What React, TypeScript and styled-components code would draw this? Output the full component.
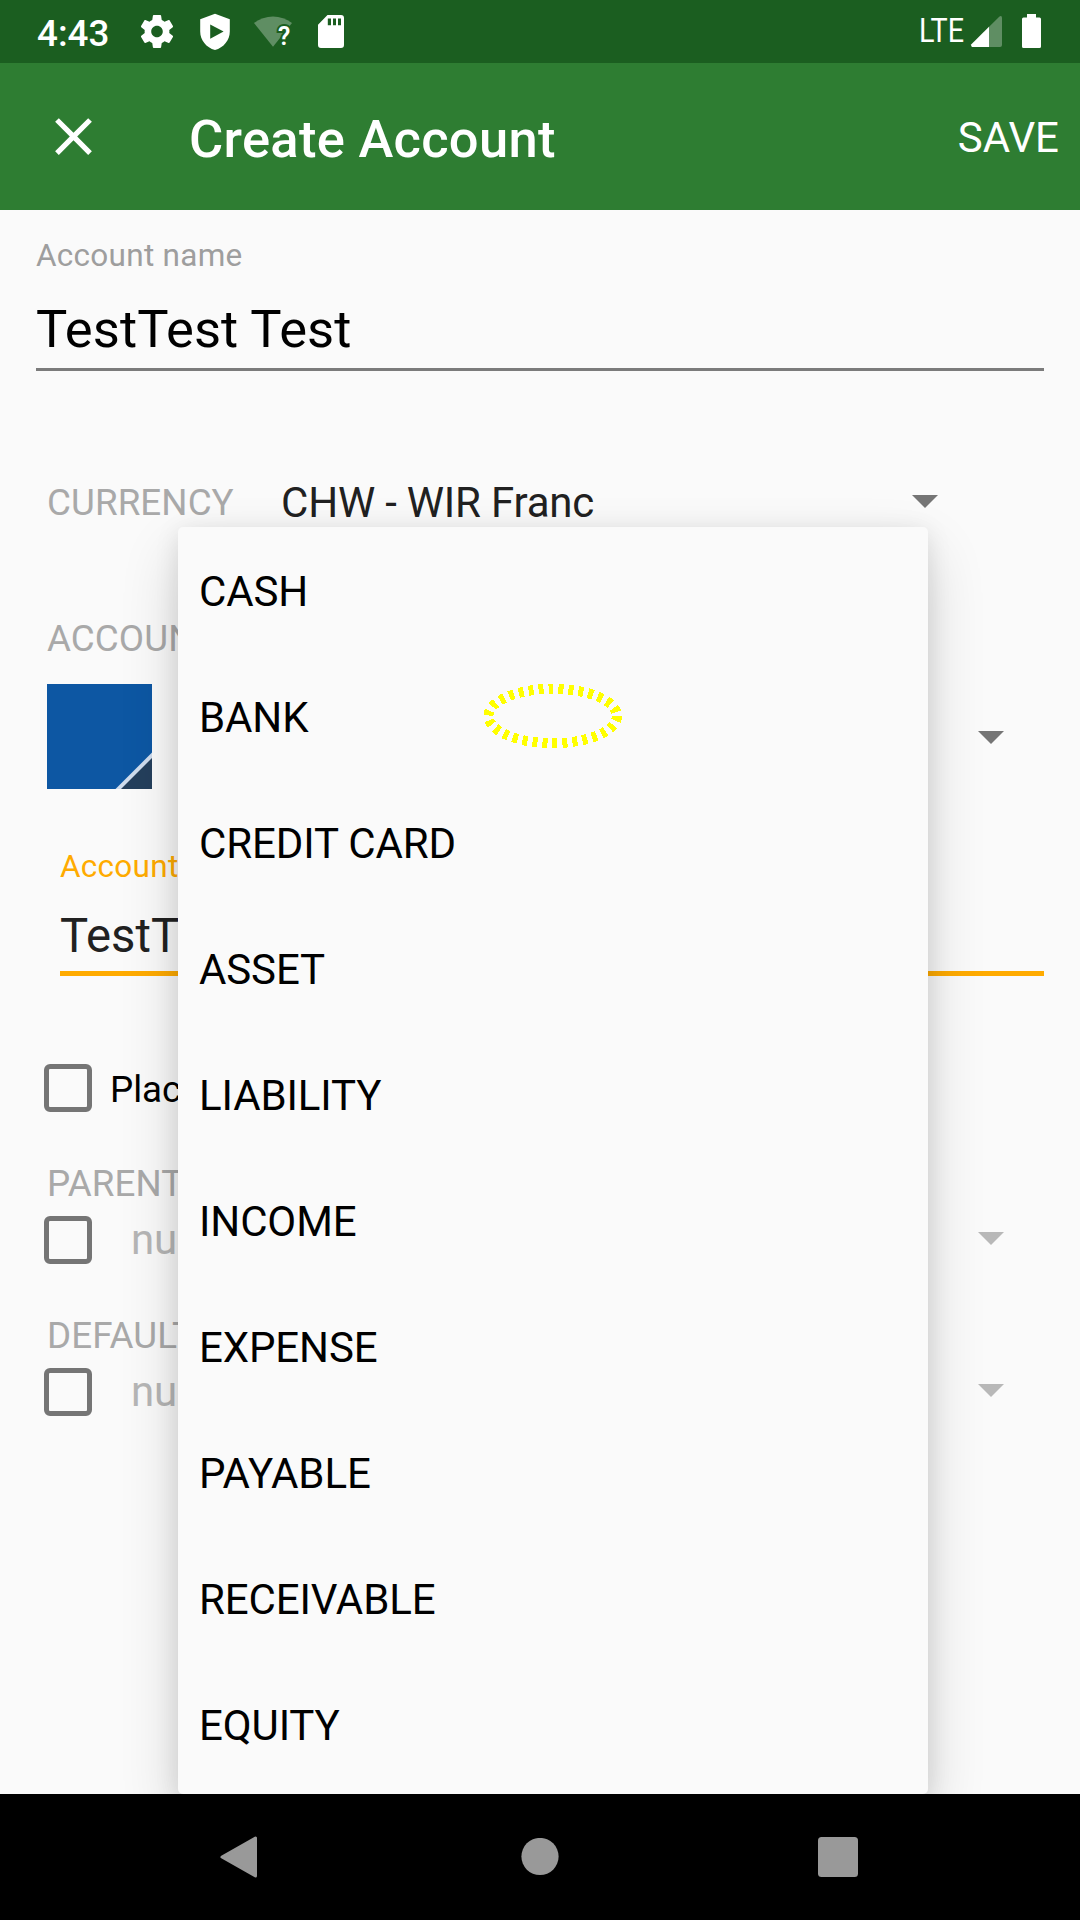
import React from "react";
import styled, { createGlobalStyle } from "styled-components";

const Global = createGlobalStyle`
  * { box-sizing: border-box; }
  body { margin: 0; background: #fafafa; font-family: Roboto, "Noto Sans", sans-serif; }
  svg { display: block; flex: none; }
`;

const Screen = styled.div`
  position: relative;
  display: flex;
  flex-direction: column;
  width: 1080px;
  height: 1920px;
  overflow: hidden;
  background: #fafafa;
`;

const StatusBar = styled.header`
  display: flex;
  align-items: flex-start;
  justify-content: space-between;
  height: 63px;
  flex: none;
  padding: 0 39px 0 37px;
  background: #1b5e20;
  color: #fff;
`;

const StatusGroup = styled.div`
  display: flex;
  align-items: flex-start;
`;

const Clock = styled.span`
  width: 100px;
  margin-top: 12px;
  font-size: 36.75px;
  font-weight: 500;
  line-height: 44px;
  white-space: nowrap;
`;

const Network = styled.span`
  width: 50px;
  margin-top: 11px;
  font-size: 33px;
  line-height: 40px;
  transform: scaleX(0.87);
  transform-origin: 0 0;
`;

const AppBar = styled.div`
  display: flex;
  align-items: center;
  height: 147px;
  flex: none;
  padding: 0 21px 0 42px;
  background: #2e7d32;
  color: #fff;
`;

const Title = styled.h1`
  flex: 1;
  margin: 5px 0 0 84px;
  font-size: 52.5px;
  font-weight: 500;
  line-height: 62px;
  letter-spacing: 0.28px;
`;

const Save = styled.span`
  margin-top: 3px;
  font-size: 42px;
  line-height: 50px;
`;

const Form = styled.main`
  display: flex;
  flex-direction: column;
  flex: 1;
  padding-top: 28px;
`;

const Field = styled.div<{ $left: number; $accent?: boolean }>`
  display: flex;
  flex-direction: column;
  flex: ${(p) => (p.$accent ? 1 : "none")};
  margin: 0 36px 0 ${(p) => p.$left}px;
  border-bottom: ${(p) => (p.$accent ? "5px solid #ffab00" : "3px solid #7b7b7b")};
`;

const FieldLabel = styled.label<{ $color: string }>`
  white-space: nowrap;
  font-size: 31.5px;
  line-height: 36px;
  letter-spacing: 0.28px;
  color: ${(p) => p.$color};
`;

const FieldValue = styled.span<{ $size: number; $line: number; $top: number; $bottom: number; $color: string }>`
  margin: ${(p) => p.$top}px 0 ${(p) => p.$bottom}px;
  font-size: ${(p) => p.$size}px;
  line-height: ${(p) => p.$line}px;
  letter-spacing: 0.06px;
  color: ${(p) => p.$color};
`;

const Row = styled.div<{ $top: number; $height: number; $left: number; $right?: number }>`
  display: flex;
  align-items: center;
  height: ${(p) => p.$height}px;
  margin-top: ${(p) => p.$top}px;
  padding: 0 ${(p) => p.$right ?? 76}px 0 ${(p) => p.$left}px;
`;

const Caption = styled.span<{ $width?: number }>`
  width: ${(p) => (p.$width ? p.$width + "px" : "auto")};
  white-space: nowrap;
  font-size: 36.75px;
  line-height: 44px;
  letter-spacing: 0.08px;
  color: #a9a9a9;
`;

const SpinnerText = styled.span<{ $left?: number; $muted?: boolean }>`
  flex: 1;
  margin-left: ${(p) => p.$left ?? 0}px;
  font-size: 42px;
  line-height: 50px;
  letter-spacing: -0.2px;
  color: ${(p) => (p.$muted ? "#b6b6b6" : "#212121")};
`;

const CheckBox = styled.span`
  width: 48px;
  height: 48px;
  flex: none;
  border: 5.5px solid #757575;
  border-radius: 6px;
`;

const CheckText = styled.span`
  white-space: nowrap;
  margin: 3px 0 0 18px;
  font-size: 36.75px;
  line-height: 44px;
  color: #000;
`;

const Spacer = styled.span`
  flex: 1;
`;

const ArrowIcon = styled.svg<{ $drop: number }>`
  margin-top: ${(p) => p.$drop}px;
`;

const Menu = styled.ul`
  position: absolute;
  left: 178px;
  top: 527px;
  width: 750px;
  height: 1267px;
  margin: 0;
  padding: 1px 0 0;
  list-style: none;
  border-radius: 5px;
  background: #fafafa;
  box-shadow: 0 26px 58px rgba(0, 0, 0, 0.16), 0 4px 24px rgba(0, 0, 0, 0.1);
`;

const MenuItem = styled.li`
  display: flex;
  align-items: center;
  height: 126px;
  padding-left: 21px;
  font-size: 42px;
  letter-spacing: -0.12px;
  color: #000;
`;

const TouchMark = styled.svg`
  position: absolute;
  left: 478px;
  top: 678px;
`;

const NavBar = styled.nav`
  position: relative;
  display: flex;
  align-items: center;
  justify-content: space-between;
  height: 126px;
  flex: none;
  padding: 0 222px 0 220px;
  background: #000;
`;

const Arrow = ({ muted = false, drop = 0 }: { muted?: boolean; drop?: number }) => (
  <ArrowIcon $drop={drop} width="26" height="13" viewBox="0 0 26 13">
    <path d="M0 0h26L13 13z" fill={muted ? "#b8b8b8" : "#757575"} />
  </ArrowIcon>
);

const accounts = ["CASH", "BANK", "CREDIT CARD", "ASSET", "LIABILITY", "INCOME", "EXPENSE", "PAYABLE", "RECEIVABLE", "EQUITY"];

export default function App() {
  return (
    <Screen>
      <Global />
      <StatusBar>
        <StatusGroup>
          <Clock>4:43</Clock>
          <svg width="215" height="63" viewBox="137 0 215 63" fill="#fff">
            <g transform="translate(137.2 11.7) scale(1.65)">
              <path d="M19.43 12.98c.04-.32.07-.64.07-.98s-.03-.66-.07-.98l2.11-1.65c.19-.15.24-.42.12-.64l-2-3.46c-.12-.22-.39-.3-.61-.22l-2.49 1c-.52-.4-1.08-.73-1.69-.98l-.38-2.65C14.46 2.18 14.25 2 14 2h-4c-.25 0-.46.18-.49.42l-.38 2.65c-.61.25-1.17.59-1.69.98l-2.49-1c-.23-.09-.49 0-.61.22l-2 3.46c-.13.22-.07.49.12.64l2.11 1.65c-.04.32-.07.65-.07.98s.03.66.07.98l-2.11 1.65c-.19.15-.24.42-.12.64l2 3.46c.12.22.39.3.61.22l2.49-1c.52.4 1.08.73 1.69.98l.38 2.65c.03.24.24.42.49.42h4c.25 0 .46-.18.49-.42l.38-2.65c.61-.25 1.17-.59 1.69-.98l2.49 1c.23.09.49 0 .61-.22l2-3.46c.12-.22.07-.49-.12-.64l-2.11-1.65zM12 15.5c-1.93 0-3.5-1.57-3.5-3.5s1.57-3.5 3.5-3.5 3.5 1.57 3.5 3.5-1.57 3.5-3.5 3.5z" />
            </g>
            <path fillRule="evenodd" d="M215 13.7L200.2 19.2V31.5C200.2 40 206.3 47.7 215 50C223.7 47.7 229.8 40 229.8 31.5V19.2ZM210.2 24.5V38.7L223.6 31.6Z" />
            <path d="M254 23C265 14.2 281 14.2 292 23L273 46.8Z" fillOpacity=".3" />
            <text x="278" y="45.2" fontFamily="Roboto, sans-serif" fontSize="25" fontWeight="600" stroke="#1b5e20" strokeWidth="4" paintOrder="stroke">?</text>
            <path fillRule="evenodd" d="M327.5 15H341Q344 15 344 18V45Q344 48 341 48H321Q318 48 318 45V24.8ZM327.8 18.5V25.2H331V18.5ZM333 18.5V25.2H336V18.5ZM338 18.5V25.2H341V18.5Z" />
          </svg>
        </StatusGroup>
        <StatusGroup>
          <Network>LTE</Network>
          <svg width="72" height="63" viewBox="969 0 72 63" fill="#fff">
            <path d="M971.4 44.2L999.5 16.4Q1002 15 1002 18V45Q1002 47 1000 47H989V26.8Z" fillOpacity=".3" />
            <path d="M971.4 44.2L989 26.8V47H972Q970.5 46 971.4 44.2Z" />
            <path d="M1027 14H1036V17.5H1039.5Q1041 17.5 1041 19V46.5Q1041 48 1039.5 48H1023.5Q1022 48 1022 46.5V19Q1022 17.5 1023.5 17.5H1027Z" />
          </svg>
        </StatusGroup>
      </StatusBar>

      <AppBar>
        <svg width="63" height="63" viewBox="0 0 24 24" fill="#fff">
          <path d="M19 6.41L17.59 5 12 10.59 6.41 5 5 6.41 10.59 12 5 17.59 6.41 19 12 13.41 17.59 19 19 17.59 13.41 12z" />
        </svg>
        <Title>Create Account</Title>
        <Save>SAVE</Save>
      </AppBar>

      <Form>
        <Field $left={36}>
          <FieldLabel $color="#9e9e9e">Account name</FieldLabel>
          <FieldValue $size={52.5} $line={60} $top={25} $bottom={9} $color="#000">TestTest Test</FieldValue>
        </Field>
        <Row $top={102} $height={60} $left={47} $right={142}>
          <Caption $width={234}>CURRENCY</Caption>
          <SpinnerText>CHW - WIR Franc</SpinnerText>
          <Arrow drop={-4} />
        </Row>
        <Row $top={84} $height={44} $left={47}>
          <Caption>ACCOUN</Caption>
        </Row>
        <Row $top={23} $height={105} $left={47}>
          <svg width="105" height="105" viewBox="0 0 105 105">
            <path d="M0 0h105v105H0z" fill="#0d57a3" />
            <path d="M105 68.5V105H68.5z" fill="#cfdced" />
            <path d="M105 74V105H74z" fill="#243f5c" />
          </svg>
          <Spacer />
          <Arrow drop={2} />
        </Row>
        <Row $top={60} $height={127} $left={0} $right={0}>
          <Field $left={60} $accent>
            <FieldLabel $color="#ffab00">Account</FieldLabel>
            <FieldValue $size={47.25} $line={54} $top={24} $bottom={8} $color="#212121">TestT</FieldValue>
          </Field>
        </Row>
        <Row $top={88} $height={48} $left={44}>
          <CheckBox />
          <CheckText>Plac</CheckText>
        </Row>
        <Row $top={50} $height={44} $left={47}>
          <Caption>PARENT</Caption>
        </Row>
        <Row $top={10} $height={48} $left={44}>
          <CheckBox />
          <SpinnerText $left={39} $muted>nu</SpinnerText>
          <Arrow muted drop={-3} />
        </Row>
        <Row $top={50} $height={44} $left={47}>
          <Caption>DEFAULT</Caption>
        </Row>
        <Row $top={10} $height={48} $left={44}>
          <CheckBox />
          <SpinnerText $left={39} $muted>nu</SpinnerText>
          <Arrow muted drop={-3} />
        </Row>
      </Form>

      <Menu>
        {accounts.map((name) => (
          <MenuItem key={name}>{name}</MenuItem>
        ))}
      </Menu>
      <TouchMark width="150" height="76" viewBox="478 678 150 76" shapeRendering="crispEdges">
        <ellipse cx="552.7" cy="716" rx="64.3" ry="27.2" fill="none" stroke="#ff0" strokeWidth="10" strokeDasharray="5 5" />
      </TouchMark>

      <NavBar>
        <svg width="41" height="44" viewBox="0 0 41 44">
          <path d="M2 22L35.5 3V41Z" fill="#999" stroke="#999" strokeWidth="3" strokeLinejoin="round" />
        </svg>
        <svg width="38" height="38" viewBox="0 0 38 38">
          <circle cx="19" cy="18.5" r="18.6" fill="#999" />
        </svg>
        <svg width="40" height="40" viewBox="0 0 40 40">
          <rect width="40" height="40" rx="3.5" fill="#999" />
        </svg>
      </NavBar>
    </Screen>
  );
}
